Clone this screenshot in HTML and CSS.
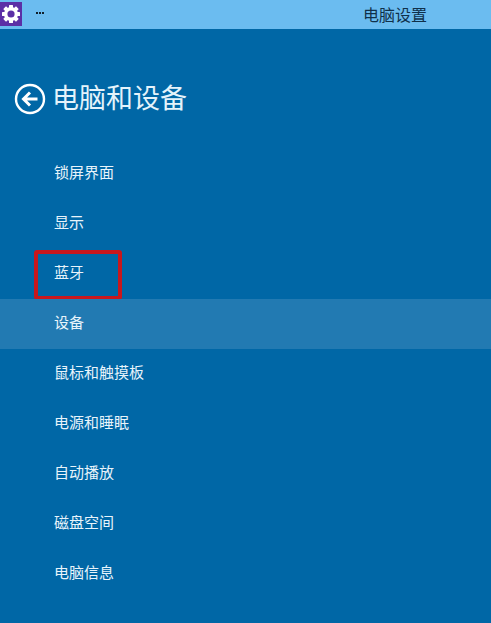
FILE: index.html
```html
<!DOCTYPE html>
<html lang="zh-CN">
<head>
    <meta charset="UTF-8">
    <title>电脑设置</title>
    <link rel="stylesheet" href="styles.css">
</head>
<body>
    <div class="title-bar">
        <div class="app-icon">
            <svg width="22" height="22" viewBox="0 0 22 22">
                <g fill="#fff">
                    <circle cx="11" cy="11" r="7"/>
                    <rect x="9" y="2" width="4" height="18" rx="0.5"/>
                    <rect x="9" y="2" width="4" height="18" rx="0.5" transform="rotate(45 11 11)"/>
                    <rect x="9" y="2" width="4" height="18" rx="0.5" transform="rotate(90 11 11)"/>
                    <rect x="9" y="2" width="4" height="18" rx="0.5" transform="rotate(135 11 11)"/>
                </g>
                <circle cx="11" cy="11" r="3.6" fill="#5b2fa6"/>
            </svg>
        </div>
        <div class="dots">
            <span></span><span></span><span></span>
        </div>
        <div class="window-title">电脑设置</div>
    </div>

    <div class="header">
        <svg class="back" width="32" height="32" viewBox="0 0 32 32">
            <circle cx="16" cy="16" r="14" fill="none" stroke="#fff" stroke-width="2.4"/>
            <path d="M23.5 16H10M16 9.5L9.5 16l6.5 6.5" fill="none" stroke="#fff" stroke-width="3"/>
        </svg>
        <h1>电脑和设备</h1>
    </div>

    <ul class="menu">
        <li>锁屏界面</li>
        <li>显示</li>
        <li class="marked">蓝牙</li>
        <li class="active">设备</li>
        <li>鼠标和触摸板</li>
        <li>电源和睡眠</li>
        <li>自动播放</li>
        <li>磁盘空间</li>
        <li>电脑信息</li>
    </ul>
</body>
</html>
```

FILE: styles.css
```css
body, html {
    margin: 0;
    padding: 0;
    height: 100%;
    overflow: hidden;
    background-color: #0067a6;
    font-family: "Noto Sans CJK SC", "Liberation Sans", sans-serif;
}

.title-bar {
    display: flex;
    align-items: flex-start;
    height: 29px;
    background-color: #6bbcf0;
}

.app-icon {
    display: flex;
    align-items: center;
    justify-content: center;
    width: 22px;
    height: 24px;
    margin-top: 2px;
    background-color: #5b2fa6;
}

.dots {
    display: flex;
    gap: 1px;
    margin: 12px 0 0 14px;
}

.dots span {
    width: 2px;
    height: 2px;
    background-color: #10202c;
}

.window-title {
    margin-left: 319px;
    font-size: 16px;
    line-height: 29px;
    color: #10304a;
}

.header {
    display: flex;
    align-items: center;
    gap: 6px;
    margin-top: 50px;
    padding-left: 14px;
    height: 38px;
}

.back {
    flex: none;
    margin-top: 2px;
}

h1 {
    margin: 0 0 2px;
    font-size: 27px;
    font-weight: 400;
    line-height: 38px;
    color: #e4f3fb;
}

.menu {
    list-style: none;
    margin: 32px 0 0;
    padding: 0;
}

.menu li {
    position: relative;
    height: 50px;
    padding-left: 54px;
    font-size: 15px;
    line-height: 46px;
    color: #e8f4fb;
}

.menu .active {
    background-color: #227ab2;
}

/* red box drawn over the screenshot */
.marked::after {
    content: "";
    position: absolute;
    left: 34px;
    top: 1px;
    width: 80px;
    height: 42px;
    border: 4px solid #c8171d;
    border-radius: 3px;
}
```
